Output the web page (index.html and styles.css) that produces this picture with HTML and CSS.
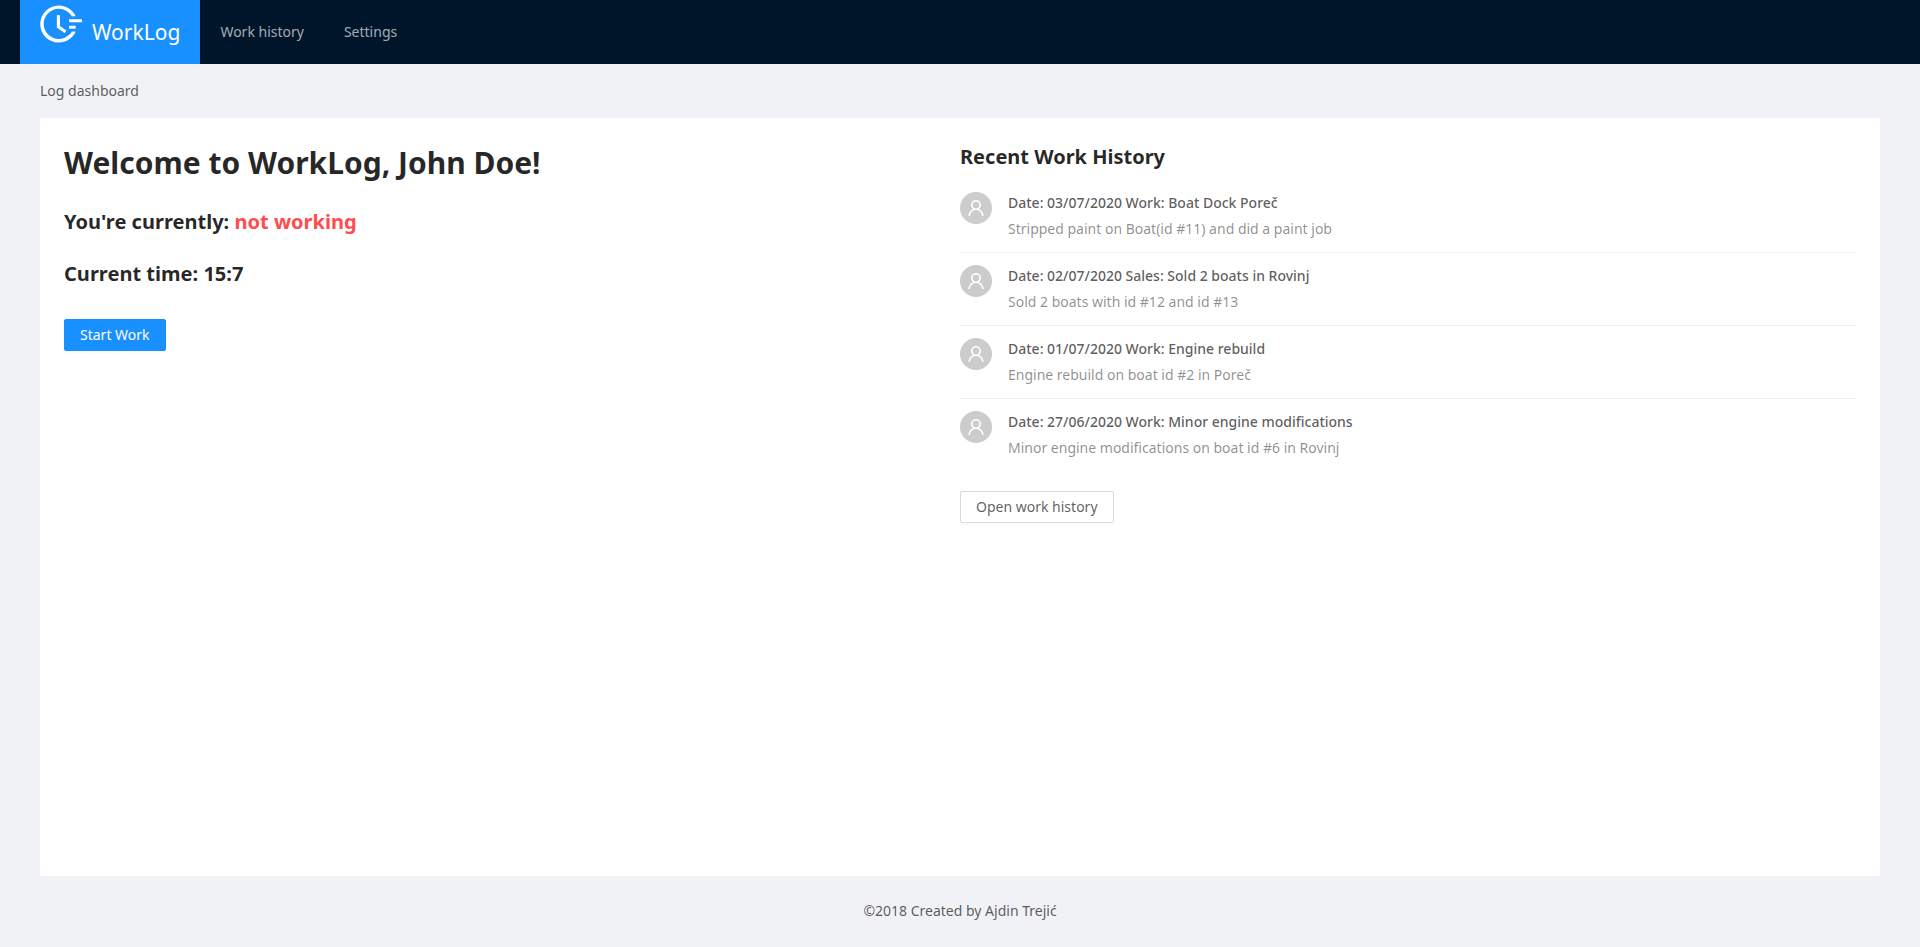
FILE: index.html
```html
<!DOCTYPE html>
<html lang="en">
<head>
<meta charset="utf-8">
<title>WorkLog</title>
<link rel="stylesheet" href="styles.css">
</head>
<body>
<svg class="defs" width="0" height="0" aria-hidden="true">
  <symbol id="user" viewBox="64 64 896 896"><path d="M858.5 763.6a374 374 0 0 0-80.6-119.5 375.63 375.63 0 0 0-119.5-80.6c-.4-.2-.8-.3-1.2-.5C719.5 518 760 444.7 760 362c0-137-111-248-248-248S264 225 264 362c0 82.700 40.500 156 102.800 201.100-.4.2-.8.3-1.200.5-44.800 18.900-85 46-119.500 80.600a375.630 375.630 0 0 0-80.600 119.500A371.700 371.700 0 0 0 136 901.800a8 8 0 0 0 8 8.200h60c4.400 0 7.900-3.500 8-7.800 2-77.200 33-149.500 87.800-204.300 56.700-56.700 132-87.900 212.200-87.900s155.500 31.200 212.200 87.900C779 752.700 810 825 812 902.200c.1 4.400 3.600 7.800 8 7.800h60a8 8 0 0 0 8-8.200c-1-47.800-10.900-94.300-29.500-138.200zM512 534c-45.900 0-89.100-17.900-121.600-50.400S340 407.900 340 362c0-45.900 17.900-89.100 50.400-121.600S466.100 190 512 190s89.100 17.900 121.600 50.400S684 316.100 684 362c0 45.900-17.900 89.100-50.400 121.600S557.900 534 512 534z"/></symbol>
</svg>
<header class="header">
  <a class="brand">
    <svg class="logo" viewBox="67 113 886 801"><path d="M945 412H689c-4.400 0-8 3.600-8 8v48c0 4.400 3.600 8 8 8h256c4.400 0 8-3.600 8-8v-48c0-4.400-3.600-8-8-8zM811 548H689c-4.400 0-8 3.600-8 8v48c0 4.400 3.600 8 8 8h122c4.400 0 8-3.600 8-8v-48c0-4.400-3.600-8-8-8zM477.300 322.500H434c-6.200 0-11.200 5-11.200 11.200v248c0 3.600 1.700 6.900 4.600 9l148.900 108.600c5 3.600 12 2.600 15.600-2.400l25.700-35.100v-.1c3.600-5 2.500-12-2.500-15.600l-126.700-91.600V333.700c.1-6.200-5-11.200-11.100-11.200zM804.800 673.900H747c-5.600 0-10.900 2.900-13.900 7.700a321 321 0 0 1-44.500 55.700 317.170 317.170 0 0 1-101.300 68.300c-39.300 16.600-81 25-124 25-43.100 0-84.800-8.400-124-25-37.900-16-72-39-101.300-68.300s-52.300-63.400-68.300-101.300c-16.600-39.200-25-80.900-25-124 0-43.100 8.400-84.700 25-124 16-37.900 39-72 68.300-101.300 29.300-29.300 63.400-52.300 101.300-68.300 39.200-16.600 81-25 124-25 43.100 0 84.800 8.400 124 25 37.900 16 72 39 101.300 68.300a321 321 0 0 1 44.500 55.700c3 4.800 8.300 7.700 13.900 7.700h57.800c6.900 0 11.300-7.200 8.200-13.300-65.200-129.700-197.400-214-345-215.700-216.100-2.700-395.600 174.200-396 390.100C71.600 727.500 246.900 903 463.200 903c149.500 0 283.900-84.600 349.800-215.800a9.180 9.180 0 0 0-8.200-13.300z"/></svg>
    <span>WorkLog</span>
  </a>
  <a class="nav">Work history</a>
  <a class="nav">Settings</a>
</header>
<main class="content">
  <div class="crumb">Log dashboard</div>
  <div class="panel">
    <section class="col">
      <h1>Welcome to WorkLog, John Doe!</h1>
      <h4 class="status">You're currently: <span class="danger">not working</span></h4>
      <h4 class="status time">Current time: 15:7</h4>
      <button class="btn primary">Start Work</button>
    </section>
    <section class="col">
      <h4 class="recent">Recent Work History</h4>
      <ul class="list">
        <li><span class="avatar"><svg><use href="#user"/></svg></span><div><h5>Date: 03/07/2020 Work: Boat Dock Poreč</h5><p>Stripped paint on Boat(id #11) and did a paint job</p></div></li>
        <li><span class="avatar"><svg><use href="#user"/></svg></span><div><h5>Date: 02/07/2020 Sales: Sold 2 boats in Rovinj</h5><p>Sold 2 boats with id #12 and id #13</p></div></li>
        <li><span class="avatar"><svg><use href="#user"/></svg></span><div><h5>Date: 01/07/2020 Work: Engine rebuild</h5><p>Engine rebuild on boat id #2 in Poreč</p></div></li>
        <li><span class="avatar"><svg><use href="#user"/></svg></span><div><h5>Date: 27/06/2020 Work: Minor engine modifications</h5><p>Minor engine modifications on boat id #6 in Rovinj</p></div></li>
      </ul>
      <button class="btn">Open work history</button>
    </section>
  </div>
</main>
<footer class="footer">©2018 Created by Ajdin Trejić</footer>
</body>
</html>
```
FILE: styles.css
```css
* { box-sizing: border-box; }
body {
  margin: 0;
  min-height: 947px;
  background: #f0f2f5;
  color: rgba(0, 0, 0, 0.65);
  font: 14px/1.5715 "Noto Sans", sans-serif;
}
.defs { position: absolute; }
.header {
  display: flex;
  height: 64px;
  padding-left: 20px;
  background: #001529;
}
.brand {
  display: flex;
  width: 180.4px;
  padding-left: 20px;
  background: #1890ff;
  color: #fff;
  font-size: 21px;
  line-height: 64px;
}
.logo {
  width: 42px;
  height: 38px;
  margin: 5px 10px 0 0;
  flex: none;
  fill: currentColor;
}
.nav {
  padding: 0 20px;
  color: rgba(255, 255, 255, 0.65);
  line-height: 64px;
}
.content { padding: 0 40px; }
.crumb { padding: 16px 0; }
.panel {
  display: flex;
  height: 758px;
  padding: 24px;
  background: #fff;
}
.col { flex: 1; }
h1, h4, h5, p, ul { margin: 0; padding: 0; }
h1, h4 { color: rgba(0, 0, 0, 0.85); font-weight: 700; }
h1 { font-size: 30px; line-height: 42px; margin-bottom: 24px; }
h4 { font-size: 20px; line-height: 28px; }
.status { font-size: 20.06px; }
.time { margin: 24px 0 31px; }
.recent { padding-top: 1px; }
.danger { color: #ff4d4f; }
.btn {
  height: 32px;
  padding: 0 15px;
  border: 1px solid #d9d9d9;
  border-radius: 2px;
  background: #fff;
  box-shadow: 0 2px 0 rgba(0, 0, 0, 0.015);
  color: rgba(0, 0, 0, 0.65);
  font: inherit;
}
.primary {
  border-color: #1890ff;
  background: #1890ff;
  box-shadow: 0 2px 0 rgba(0, 0, 0, 0.015);
  color: #fff;
}
.list { margin: 9px 0 20px; list-style: none; }
.list li {
  display: flex;
  gap: 16px;
  height: 73px;
  padding: 12px 0;
  border-bottom: 1px solid #f0f0f0;
}
.list li:last-child { height: 72px; border: 0; }
.avatar {
  display: flex;
  align-items: center;
  justify-content: center;
  width: 32px;
  height: 32px;
  border-radius: 50%;
  background: #ccc;
}
.avatar svg { width: 18px; height: 18px; fill: #fff; }
h5 { margin-bottom: 4px; font-size: 14px; font-weight: 500; line-height: 22px; }
.list p { color: rgba(0, 0, 0, 0.45); line-height: 22px; }
.footer { padding: 24px 50px; text-align: center; }
```
